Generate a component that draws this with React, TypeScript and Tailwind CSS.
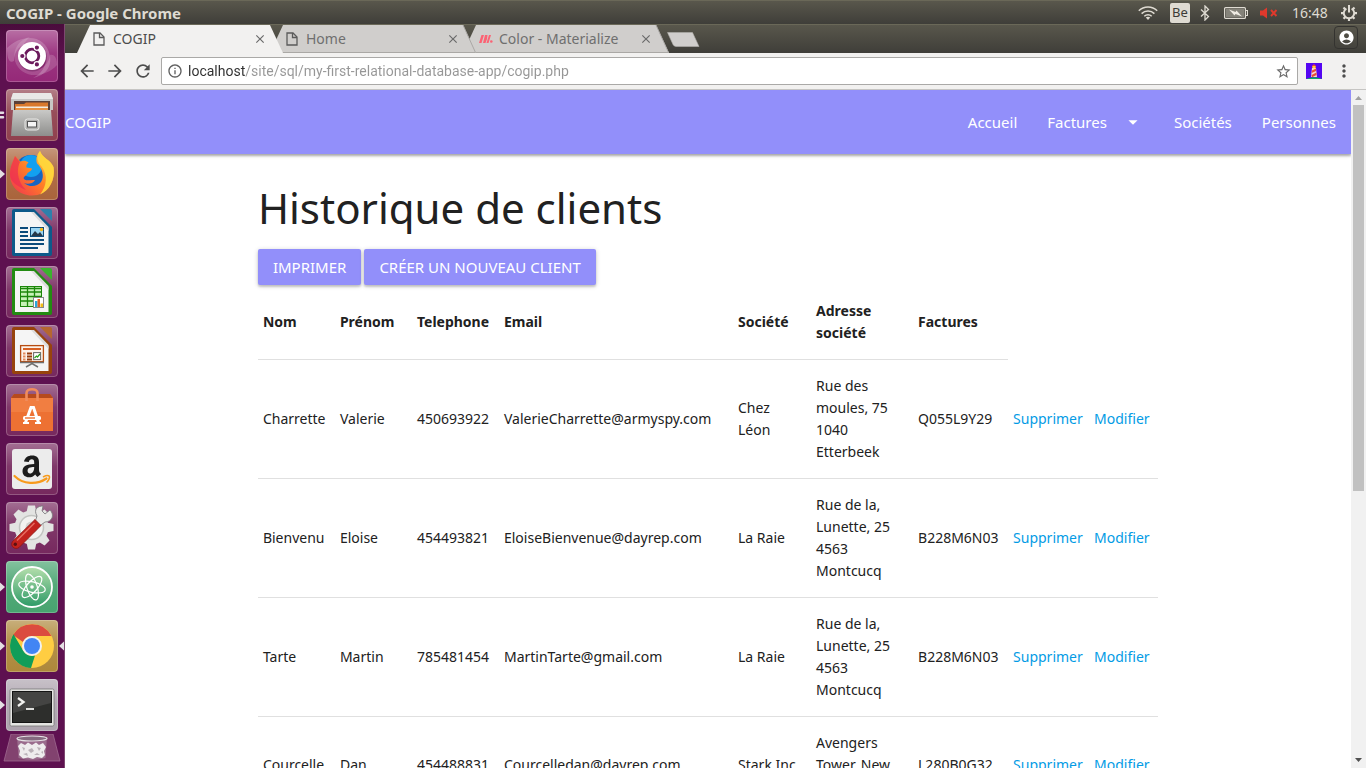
import type { ReactNode } from "react";
import {
  MdAccountCircle,
  MdArrowBack,
  MdArrowDropDown,
  MdArrowForward,
  MdClose,
  MdInfoOutline,
  MdMoreVert,
  MdRefresh,
  MdStarBorder,
} from "react-icons/md";

type Client = {
  nom: string;
  prenom: string;
  telephone: string;
  email: string;
  societe: string;
  adresse: string;
  facture: string;
};

const clients: Client[] = [
  { nom: "Charrette", prenom: "Valerie", telephone: "450693922", email: "ValerieCharrette@armyspy.com", societe: "Chez\nLéon", adresse: "Rue des\nmoules, 75\n1040\nEtterbeek", facture: "Q055L9Y29" },
  { nom: "Bienvenu", prenom: "Eloise", telephone: "454493821", email: "EloiseBienvenue@dayrep.com", societe: "La Raie", adresse: "Rue de la,\nLunette, 25\n4563\nMontcucq", facture: "B228M6N03" },
  { nom: "Tarte", prenom: "Martin", telephone: "785481454", email: "MartinTarte@gmail.com", societe: "La Raie", adresse: "Rue de la,\nLunette, 25\n4563\nMontcucq", facture: "B228M6N03" },
  { nom: "Courcelle", prenom: "Dan", telephone: "454488831", email: "Courcelledan@dayrep.com", societe: "Stark Inc", adresse: "Avengers\nTower, New\nYork", facture: "L280B0G32" },
];

/* ---------- Desktop top bar ---------- */

function WifiIcon() {
  return (
    <svg width="20" height="16" viewBox="0 0 20 16" fill="none" stroke="#dfdbd2" strokeWidth="1.5" aria-hidden="true">
      <path d="M0.8 5.8C5.8 0.8 14.2 0.8 19.2 5.8" />
      <path d="M3.6 8.6C7.2 5 12.8 5 16.4 8.6" />
      <path d="M6.3 11.2C8.4 9.1 11.6 9.1 13.7 11.2" />
      <path d="M7.8 12.6L10 15l2.200-2.400C11 11.500 9 11.500 7.800 12.600Z" fill="#dfdbd2" stroke="none" />
    </svg>
  );
}

function BluetoothIcon() {
  return (
    <svg width="10" height="16" viewBox="0 0 10 16" fill="none" stroke="#dfdbd2" strokeWidth="1.3" aria-hidden="true">
      <path d="M1 4.500L8.500 11.500L5 15V1L8.500 4.500L1 11.500" />
    </svg>
  );
}

function BatteryIcon() {
  return (
    <svg width="24" height="14" viewBox="0 0 24 14" aria-hidden="true">
      <rect x="0.600" y="1.600" width="20.800" height="10.800" rx="1" fill="none" stroke="#dfdbd2" strokeWidth="1.200" />
      <rect x="2" y="3" width="18" height="8" fill="#85837a" />
      <path d="M22 4.500h1.500v5H22" fill="none" stroke="#dfdbd2" strokeWidth="1.200" />
      <path d="M5 3.500l6.500 2.500 1-1.500 5.500 6-6.500-2.500-1 1.500z" fill="#eeeae2" />
    </svg>
  );
}

function MutedIcon() {
  return (
    <svg width="18" height="12" viewBox="0 0 18 12" aria-hidden="true">
      <path d="M0 3.500h3L7 0.500v11L3 8.500H0z" fill="#e0392c" />
      <path d="M11 3l5.500 6M16.500 3L11 9" stroke="#e0392c" strokeWidth="1.900" />
    </svg>
  );
}

function SessionIcon() {
  return (
    <svg width="18" height="18" viewBox="0 0 18 18" fill="none" stroke="#dfdbd2" aria-hidden="true">
      <path d="M6.400 4.600a5.200 5.200 0 1 0 5.200 0" strokeWidth="1.900" />
      <path d="M9 1v7.500" strokeWidth="2" />
      <path d="M3.500 3.500l1.700 1.700M14.500 3.500l-1.700 1.700M1 9.200h2.600M14.400 9.200H17M3.500 14.800l1.700-1.700M14.500 14.800l-1.700-1.700M9 14.500V17" strokeWidth="2.200" />
    </svg>
  );
}

function TopBar() {
  return (
    <header className="flex h-6 shrink-0 items-center justify-between border-t border-[#6a6858] bg-linear-to-b from-[#59574c] to-[#3f3e39] pl-1.5 pr-2 text-[#dfdbd2]">
      <span className="text-[15px] leading-5 font-bold">COGIP - Google Chrome</span>
      <div className="flex items-center text-[14px]">
        <WifiIcon />
        <span className="ml-3 flex h-5 w-5 items-center justify-center rounded-xs bg-[#dfdbd2] text-[13px] text-[#3c3b37]">Be</span>
        <span className="ml-2.5"><BluetoothIcon /></span>
        <span className="ml-3.5"><BatteryIcon /></span>
        <span className="ml-3"><MutedIcon /></span>
        <time className="ml-3.5 w-9">16:48</time>
        <span className="ml-3"><SessionIcon /></span>
      </div>
    </header>
  );
}

/* ---------- Launcher ---------- */

function Pip() {
  return <path d="M0 21.500L5 26L0 30.500Z" fill="#e4dfe3" />;
}

function Tile({ fill }: { fill: string }) {
  return (
    <>
      <rect x="6" y="0" width="52" height="52" rx="4" fill={fill} />
      <rect x="6" y="0" width="52" height="52" rx="4" fill="url(#gloss)" />
      <rect x="6.500" y="0.500" width="51" height="51" rx="3.500" fill="none" stroke="#fff" strokeOpacity="0.220" />
    </>
  );
}

function UbuntuArt() {
  return (
    <>
      <Tile fill="#922274" />
      <path d="M7 18C22 3 46 4 50 26C52 39 43 46 33 48C50 40 50 18 34 14C22 11 14 20 14 31C9 34 7 28 7 18Z" fill="#fff" opacity="0.200" />
      <path d="M57 35C43 50 20 48 15 31C12 19 20 9 30 7C17 17 19 37 32 39C42 41 49 34 50 25C55 24 57 29 57 35Z" fill="#fff" opacity="0.160" />
      <circle cx="32.500" cy="27" r="14.500" fill="#5e1750" opacity="0.400" />
      <circle cx="32" cy="26" r="14" fill="#fff" />
      <circle cx="32" cy="26" r="6.800" fill="none" stroke="#6b1a5c" strokeWidth="2.800" />
      <g fill="#6b1a5c" stroke="#fff" strokeWidth="1.200">
        <circle cx="22.300" cy="26" r="2.700" />
        <circle cx="36.900" cy="17.600" r="2.700" />
        <circle cx="36.900" cy="34.400" r="2.700" />
      </g>
    </>
  );
}

function FilesArt() {
  return (
    <>
      <path d="M0 22.500h3a1 1 0 0 1 0 2.500H0zM0 27h3a1 1 0 0 1 0 2.500H0z" fill="#e4dfe3" />
      <Tile fill="#8c3a48" />
      <path d="M13 4H51L53 10V21H11V10Z" fill="#c7c7c5" />
      <path d="M13 4H51L53 10H11Z" fill="#e9e9e7" />
      <rect x="14" y="12" width="36" height="10" fill="#5c4037" />
      <path d="M15 15h9l2-1.500h22V22H15z" fill="#d9782c" />
      <path d="M16 17.500h32V22H16z" fill="#f3ece0" />
      <path d="M16 19h32v3H16z" fill="#e79142" />
      <path d="M13 21H51L53 47H11Z" fill="url(#steel)" />
      <rect x="25" y="30" width="14" height="11" rx="2.500" fill="#b0b0ae" stroke="#e9e9e7" />
      <rect x="27.500" y="32.500" width="9" height="5.500" fill="#f5f5f5" stroke="#535353" />
    </>
  );
}

function FirefoxArt() {
  return (
    <>
      <Pip />
      <Tile fill="#a75f35" />
      <circle cx="31" cy="24" r="17" fill="#1565c4" />
      <circle cx="31" cy="18" r="11" fill="#12a0f0" />
      <path d="M15 8L20.500 13.500C23 12.500 26 12.500 28.500 14.500C26.500 16 26 18 26.500 19.500L32 20.500C32 22.500 29.500 23.500 27.500 25C27 27.500 24.500 27.500 23.500 30C25 34 30 31.500 35 32C33 36 27 36.500 24 35C29 39.500 37 39 41 34C45 28 42 20 37 15.500C35.500 11 37 6 40 3C42 10 50 11 53.500 19C56 34 47 47.500 32 47.500C19 47.500 10 38 10 27C10 19 12 16 15 8Z" fill="url(#fox)" />
      <path d="M40 3C42 10 50 11 53.500 19C55.500 32 49 43 40 46.500C47 38 48 27 41.500 18.500C37 14 36 8 40 3Z" fill="#ffd83c" opacity="0.900" />
      <path d="M15 8L20 14C17 20 16 32 26 42C16 38 10 33 10 27C10 19 12 16 15 8Z" fill="#ed2c53" opacity="0.700" />
    </>
  );
}

function OfficeSheet({ dark, light, children }: { dark: string; light: string; children: ReactNode }) {
  return (
    <>
      <Tile fill="#722259" />
      <path d="M14 2H34L52 20V47a2 2 0 0 1-2 2H14a2 2 0 0 1-2-2V4a2 2 0 0 1 2-2Z" fill={dark} />
      <path d="M40 2H50a2 2 0 0 1 2 2V14Z" fill={light} />
      <path d="M15 5H33L48.500 21V46H15Z" fill="#f5f5f5" />
      <path d="M34 5L48.500 20V24L31 5Z" fill="#dcdcdc" />
      {children}
    </>
  );
}

function WriterArt() {
  return (
    <OfficeSheet dark="#0d5a8a" light="#2e80ab">
      <path d="M20 21h8M20 25h8M20 29h8M20 33h24M20 37h24M20 41h18" stroke="#0b4b7b" strokeWidth="2" />
      <rect x="30.500" y="20.500" width="13" height="9" fill="#9bd5f3" stroke="#0b4b7b" />
      <path d="M31 29l4-5 3 3 2-2 3 4z" fill="#26384a" />
      <circle cx="41.500" cy="22.500" r="1.700" fill="#f5b917" />
    </OfficeSheet>
  );
}

function CalcArt() {
  return (
    <OfficeSheet dark="#238b12" light="#3bb32e">
      <rect x="20.500" y="20.500" width="21" height="20" fill="#c8f2b8" stroke="#1b8609" />
      <path d="M20 22.500h22M20 26h22M20 30.500h22M20 35h22M27.500 20v21M34.500 20v21" stroke="#1b8609" strokeWidth="1.300" />
      <rect x="33.500" y="31.500" width="10" height="10" fill="#fff" stroke="#888" />
      <path d="M35 35h2.500v6H35z" fill="#2ba6db" />
      <path d="M37.500 33H40v8h-2.500z" fill="#e46224" />
      <path d="M40.500 37.500H43V41h-2.500z" fill="#f2bd16" />
    </OfficeSheet>
  );
}

function ImpressArt() {
  return (
    <OfficeSheet dark="#97430d" light="#b56730">
      <rect x="20.600" y="20.600" width="22.800" height="16" fill="#fdf3ea" stroke="#b64c12" strokeWidth="1.300" />
      <path d="M23 24h18" stroke="#d76023" strokeWidth="2" />
      <path d="M23 28.500h2.500M23 31.500h2.500M23 34.500h2.500" stroke="#e38b5b" strokeWidth="1.800" />
      <path d="M27 28.500h5M27 31.500h5M27 34.500h5" stroke="#963d0c" strokeWidth="1.800" />
      <rect x="33.600" y="27.600" width="7" height="7" fill="#fff" stroke="#666" />
      <path d="M34.500 33l2-2 1 1 2.500-3" fill="none" stroke="#28a01b" strokeWidth="1.200" />
      <path d="M20 37.500h24M32 37v2M26 42l6-3.500L38 42" fill="none" stroke="#707070" strokeWidth="1.500" />
    </OfficeSheet>
  );
}

function SoftwareArt() {
  return (
    <>
      <Tile fill="#722259" />
      <path d="M11 14L14 10H50L53 14V47H11Z" fill="#ed7133" />
      <path d="M11 14L14 10H50L53 14Z" fill="#b64a1d" />
      <path d="M11 14H53V28H11Z" fill="#f58b50" opacity="0.500" />
      <path d="M26.500 17V9C26.500 4 37.500 4 37.500 9V17" fill="none" stroke="#f08c5d" strokeWidth="2.600" />
      <path d="M25.500 38.500L31 23.500H33.500L38.500 38.500" fill="none" stroke="#fff" strokeWidth="3" />
      <rect x="23" y="32" width="18" height="4" rx="1.500" fill="#fff" />
      <path d="M25 34h10" stroke="#ed7133" strokeWidth="1.400" />
      <path d="M23 39h6M35 39h6" stroke="#fff" strokeWidth="2" />
    </>
  );
}

function AmazonArt() {
  return (
    <>
      <Tile fill="#722259" />
      <rect x="12" y="6" width="40" height="40" rx="3" fill="#ececec" />
      <path d="M24 18.500C25 14.500 28 12.500 32 12.500C37 12.500 39 15 39 19V27C39 29 40 30 41 31L37.500 34C36.500 33.300 35.700 32.500 35.200 31.500C33.500 33.500 31.500 34.300 29 34.300C25.200 34.300 22.500 32 22.500 28.300C22.500 23 26.500 21.300 34.200 21V19.500C34.200 17.500 33.500 16.300 31.800 16.300C30 16.300 29.200 17.300 28.800 19ZM34.200 24C30 24 27.600 25 27.600 27.700C27.600 29.500 28.500 30.500 30 30.500C32.700 30.500 34.200 28 34.200 24Z" fill="#1c1c1c" fillRule="evenodd" />
      <path d="M14.500 33C23 41.500 37 42 46.500 35.500" fill="none" stroke="#f79a1c" strokeWidth="2.200" strokeLinecap="round" />
      <path d="M43.500 33.700C46 32.500 48.500 32.500 49.300 33.200C50 34 49 37 47 39" fill="none" stroke="#f79a1c" strokeWidth="1.600" strokeLinecap="round" />
    </>
  );
}

function SettingsArt() {
  const teeth = [0, 45, 90, 135, 180, 225, 270, 315];
  return (
    <>
      <Tile fill="#722259" />
      <g transform="translate(31.500 25.500)">
        {teeth.map((angle) => (
          <path key={angle} d="M-5 -15L-3.500 -22H3.500L5 -15Z" fill="#e3e4e2" transform={`rotate(${angle})`} />
        ))}
        <circle r="17" fill="#e3e4e2" />
        <circle r="12" fill="#f2f2f0" stroke="#c2c4c1" strokeWidth="1.500" />
        <circle r="6" fill="#d0d0ce" />
      </g>
      <path d="M35 20L37 14C33 7 38 4 43 4L42 9L45 12L50 8C55 13 52 20 45 20L38 25Z" fill="#e9e9e7" stroke="#77777a" strokeWidth="0.800" />
      <path d="M35 17.500L41 23.500L19 45.500C15 48.500 9.500 44 12.500 39.500Z" fill="#c3221d" stroke="#8d1512" strokeWidth="0.800" />
      <path d="M34.500 21L17 38.500" stroke="#e76d62" strokeWidth="1.500" />
      <circle cx="15.300" cy="42.300" r="1.700" fill="#5c1010" />
    </>
  );
}

function AtomArt() {
  return (
    <>
      <Pip />
      <Tile fill="#42a16b" />
      <circle cx="32" cy="26" r="20" fill="url(#atomGreen)" stroke="#fff" strokeWidth="1.800" />
      <g fill="none" stroke="#fff" strokeWidth="1.200" transform="translate(32 26)">
        <ellipse rx="13.500" ry="5.200" transform="rotate(13)" />
        <ellipse rx="13.500" ry="5.200" transform="rotate(72)" />
        <ellipse rx="13.500" ry="5.200" transform="rotate(-48)" />
      </g>
      <circle cx="32" cy="26" r="1.800" fill="#fff" />
    </>
  );
}

function ChromeArt() {
  return (
    <>
      <Pip />
      <path d="M64 21.500L59 26L64 30.500Z" fill="#e4dfe3" />
      <Tile fill="#ab8435" />
      <circle cx="32" cy="26" r="22" fill="#ffcd42" />
      <path d="M13 15A22 22 0 0 1 51.500 16H32A10 10 0 0 0 23 22Z" fill="#db4b3f" />
      <path d="M13.500 14.200L23.400 31A10 10 0 0 0 35 35.500L31 48A22 22 0 0 1 13.500 14.200Z" fill="#109d59" />
      <circle cx="32" cy="26" r="10" fill="#f1f1f1" />
      <circle cx="32" cy="26" r="8" fill="#4285f4" />
    </>
  );
}

function TerminalArt() {
  return (
    <>
      <Pip />
      <Tile fill="#aaa0ab" />
      <rect x="10" y="10" width="44" height="37" rx="1.500" fill="#e4e4e2" stroke="#777" strokeWidth="0.800" />
      <rect x="12.500" y="12.500" width="39" height="31" fill="#2d2e2c" stroke="#141414" />
      <path d="M13 13H51V24L13 34Z" fill="#fff" opacity="0.110" />
      <path d="M18 19L23.500 23L18 27" fill="none" stroke="#f2f2f0" strokeWidth="2.300" />
      <path d="M26 30h8" stroke="#f2f2f0" strokeWidth="1.800" />
    </>
  );
}

function TrashArt() {
  return (
    <>
      <path d="M11 0H53L60 27H4Z" fill="#82426f" stroke="#9f6a90" strokeWidth="0.800" />
      <path d="M17 3H47L45.500 24Q32 28 18.500 24Z" fill="#b79fb2" opacity="0.450" />
      <path d="M18 12L21 9L25 11L28 8.500L32 11L36 8.500L39 11L43 9L46 13L44 17L45 21L42 24L37 23L33 25L28 23.500L23 24.500L19 21L20 17Z" fill="#eeeced" />
      <path d="M22 13l3 1-1 3zM28 16l4-2 2 3-3 2zM37 13l4 1-2 3zM23 20l4-1 1 3zM34 21l3-2 3 2zM41 18l2-1v3z" fill="#bab2b8" />
      <ellipse cx="32" cy="4.500" rx="15" ry="2.500" fill="#846a7f" stroke="#e6e2e5" strokeWidth="1.200" />
    </>
  );
}

const launcherItems: { name: string; art: () => ReactNode }[] = [
  { name: "Rechercher", art: UbuntuArt },
  { name: "Fichiers", art: FilesArt },
  { name: "Firefox", art: FirefoxArt },
  { name: "LibreOffice Writer", art: WriterArt },
  { name: "LibreOffice Calc", art: CalcArt },
  { name: "LibreOffice Impress", art: ImpressArt },
  { name: "Logiciels Ubuntu", art: SoftwareArt },
  { name: "Amazon", art: AmazonArt },
  { name: "Paramètres", art: SettingsArt },
  { name: "Atom", art: AtomArt },
  { name: "Google Chrome", art: ChromeArt },
  { name: "Terminal", art: TerminalArt },
];

function Launcher() {
  return (
    <nav aria-label="Lanceur" className="flex w-[65px] shrink-0 flex-col gap-[7px] overflow-hidden border-r border-[#7d4770] bg-linear-to-b from-[#4a0c3c] via-[#5e1150] via-5% to-[#5e1150] pt-1.5">
      <svg className="absolute" width="0" height="0" aria-hidden="true">
        <defs>
          <linearGradient id="gloss" x1="0" y1="0" x2="0" y2="1">
            <stop offset="0" stopColor="#fff" stopOpacity="0.350" />
            <stop offset="0.450" stopColor="#fff" stopOpacity="0.100" />
            <stop offset="1" stopColor="#fff" stopOpacity="0.030" />
          </linearGradient>
          <linearGradient id="steel" x1="0" y1="0" x2="0" y2="1">
            <stop offset="0" stopColor="#c9c9c7" />
            <stop offset="1" stopColor="#8e8e8c" />
          </linearGradient>
          <linearGradient id="fox" x1="0" y1="1" x2="1" y2="0">
            <stop offset="0" stopColor="#f03052" />
            <stop offset="0.500" stopColor="#ff8026" />
            <stop offset="1" stopColor="#ffe14a" />
          </linearGradient>
          <linearGradient id="atomGreen" x1="0" y1="0" x2="0" y2="1">
            <stop offset="0" stopColor="#b5dfac" />
            <stop offset="1" stopColor="#2d9a67" />
          </linearGradient>
        </defs>
      </svg>
      {launcherItems.map(({ name, art: Art }) => (
        <button key={name} type="button" aria-label={name} className="h-[52px] shrink-0">
          <svg width="64" height="52" viewBox="0 0 64 52" aria-hidden="true"><Art /></svg>
        </button>
      ))}
      <button type="button" aria-label="Corbeille" className="-mt-1 h-7 shrink-0">
        <svg width="64" height="28" viewBox="0 0 64 28" aria-hidden="true"><TrashArt /></svg>
      </button>
    </nav>
  );
}

/* ---------- Browser window ---------- */

function PageIcon() {
  return (
    <svg width="12" height="14" viewBox="0 0 12 14" fill="none" stroke="#5a5a5a" strokeWidth="1.300" aria-hidden="true">
      <path d="M1 1H7L11 5V13H1Z" />
      <path d="M6.500 1V5.500H11" />
    </svg>
  );
}

function MaterializeIcon() {
  return (
    <svg width="14" height="8" viewBox="0 0 14 8" fill="#fb6374" aria-hidden="true">
      <path d="M2.500 0H5L2.500 8H0Z" />
      <path d="M6 0H8.500L8 4L6.500 8H4Z" />
      <path d="M10 0H12L9.500 8H7.500Z" />
      <circle cx="12.300" cy="6.500" r="1.300" />
    </svg>
  );
}

function Tab({ title, icon, active, className }: { title: string; icon: ReactNode; active?: boolean; className: string }) {
  return (
    <div role="tab" aria-selected={!!active} className={`relative flex w-[206px] items-center pb-px ${className}`}>
      <svg className="absolute inset-0 h-full w-full" viewBox="0 0 206 28" preserveAspectRatio="none" aria-hidden="true">
        <path d="M0 28L13 0H193L206 28Z" fill={active ? "#f2f1f0" : "#d0cecc"} />
        {!active && <path d="M0 27.500H205.500L193 0" fill="none" stroke="#aaa8a5" />}
      </svg>
      <span className="relative ml-4 flex w-5 items-center">{icon}</span>
      <span className={`relative flex-1 text-[14px] ${active ? "text-[#4c4c4c]" : "text-[#6f6f6f]"}`}>{title}</span>
      <button type="button" aria-label={`Fermer ${title}`} className="relative mr-4 text-[#6a6a6a]">
        <MdClose size={14} />
      </button>
    </div>
  );
}

function TabStrip() {
  return (
    <div className="flex h-[29px] shrink-0 items-stretch border-t border-[#6a6858] bg-linear-to-b from-[#59574c] to-[#3f3e39] pl-3">
      <div role="tablist" className="isolate flex">
        <Tab title="COGIP" icon={<PageIcon />} active className="z-30" />
        <Tab title="Home" icon={<PageIcon />} className="z-20 -ml-[13px]" />
        <Tab title="Color - Materialize" icon={<MaterializeIcon />} className="z-10 -ml-[13px]" />
      </div>
      <button type="button" aria-label="Nouvel onglet" className="-ml-0.5 mt-[7px] h-[15px]">
        <svg width="33" height="15" viewBox="0 0 33 15" aria-hidden="true">
          <path d="M0.500 0.500H25.500L32 14.500H9Q7 14.500 6 12.500Z" fill="#d0cecc" stroke="#b2b0ad" strokeWidth="0.600" />
        </svg>
      </button>
      <button type="button" aria-label="Profil" className="mt-px mb-1 ml-auto mr-2 flex w-6 items-center justify-center rounded-sm border border-[#343330] text-white">
        <MdAccountCircle size={17} />
      </button>
    </div>
  );
}

function LighthouseIcon() {
  return (
    <svg width="16" height="16" viewBox="0 0 16 16" aria-hidden="true">
      <rect width="16" height="16" fill="#5405f2" />
      <path d="M0 16Q8 12.500 16 16Z" fill="#0caa63" />
      <path d="M6 5H10L11 14H5Z" fill="#f8d9d1" />
      <path d="M6 7.500L10 5.500V8L5.700 10ZM5.500 12L10.500 9.500V12L6 14.300Z" fill="#e84a39" />
      <path d="M6 4.500V3L8 1L10 3V4.500Z" fill="#e84a39" />
      <rect x="6.500" y="3" width="3" height="2.200" fill="#ffd33c" />
    </svg>
  );
}

function Toolbar() {
  return (
    <div className="flex h-[37px] shrink-0 items-center border-b border-[#c6c5c3] bg-[#f2f1f0] pl-3 pr-3 text-[#4d4d4d]">
      <div className="flex gap-2">
        <button type="button" aria-label="Retour"><MdArrowBack size={20} /></button>
        <button type="button" aria-label="Suivant"><MdArrowForward size={20} /></button>
        <button type="button" aria-label="Actualiser"><MdRefresh size={20} /></button>
      </div>
      <div className="ml-2 flex h-7 flex-1 items-center rounded-xs border border-[#aaa9a7] bg-white px-[5px]">
        <MdInfoOutline size={16} className="shrink-0 text-[#5f5f5f]" />
        <input
          type="text"
          aria-label="Adresse"
          defaultValue="localhost/site/sql/my-first-relational-database-app/cogip.php"
          className="ml-[5px] min-w-0 flex-1 bg-[linear-gradient(to_right,#2f2f2f_57px,#969696_57px)] bg-clip-text font-[Roboto,sans-serif] text-[14px] text-transparent outline-none"
        />
        <button type="button" aria-label="Ajouter aux favoris" className="text-[#6a6a6a]"><MdStarBorder size={17} /></button>
      </div>
      <button type="button" aria-label="Lighthouse" className="ml-2"><LighthouseIcon /></button>
      <button type="button" aria-label="Menu" className="ml-3"><MdMoreVert size={20} /></button>
    </div>
  );
}

function Scrollbar() {
  return (
    <div className="flex w-[15px] shrink-0 flex-col items-center bg-[#f1f1f1]" aria-hidden="true">
      <svg width="15" height="15" viewBox="0 0 15 15"><path d="M4 10H11L7.500 6Z" fill="#a0a0a0" /></svg>
      <div className="h-[57%] w-[11px] bg-[#c1c1c1]" />
      <svg className="mt-auto" width="15" height="15" viewBox="0 0 15 15"><path d="M4 5H11L7.500 9Z" fill="#505050" /></svg>
    </div>
  );
}

/* ---------- COGIP application ---------- */

function SiteNav() {
  return (
    <nav className="relative flex h-16 items-center justify-between bg-[#928ffa] text-[15px] leading-6 text-white shadow-[0_2px_2px_0_rgba(0,0,0,0.24),0_1px_5px_0_rgba(0,0,0,0.2)]">
      <a href="#accueil">COGIP</a>
      <ul className="flex items-center">
        <li><a href="#accueil" className="block px-[15px]">Accueil</a></li>
        <li>
          <a href="#factures" className="flex items-center gap-[15px] px-[15px]">
            Factures
            <MdArrowDropDown size={22} />
          </a>
        </li>
        <li><a href="#societes" className="block px-[15px]">Sociétés</a></li>
        <li><a href="#personnes" className="block px-[15px]">Personnes</a></li>
      </ul>
    </nav>
  );
}

const buttonClass =
  "h-9 rounded-xs bg-[#928ffa] px-[15px] text-[15px] text-white uppercase shadow-[0_2px_2px_0_rgba(0,0,0,0.14),0_1px_5px_0_rgba(0,0,0,0.2)]";

function ClientTable() {
  return (
    <table className="w-full table-fixed border-collapse text-left text-[14px] leading-[22px]">
      <colgroup>
        <col className="w-[77px]" />
        <col className="w-[77px]" />
        <col className="w-[87px]" />
        <col className="w-[234px]" />
        <col className="w-[78px]" />
        <col className="w-[102px]" />
        <col className="w-[95px]" />
        <col className="w-[81px]" />
        <col className="w-[69px]" />
      </colgroup>
      <thead>
        <tr>
          {["Nom", "Prénom", "Telephone", "Email", "Société", "Adresse société", "Factures"].map((label) => (
            <th key={label} scope="col" className="border-b border-[#e0e0e0] px-[5px] py-[15px] font-bold">{label}</th>
          ))}
        </tr>
      </thead>
      <tbody>
        {clients.map((client) => (
          <tr key={client.email} className="border-b border-[#e0e0e0] whitespace-pre-line">
            <td className="px-[5px] py-[15px]">{client.nom}</td>
            <td className="px-[5px] py-[15px]">{client.prenom}</td>
            <td className="px-[5px] py-[15px]">{client.telephone}</td>
            <td className="px-[5px] py-[15px]">{client.email}</td>
            <td className="px-[5px] py-[15px]">{client.societe}</td>
            <td className="px-[5px] py-[15px]">{client.adresse}</td>
            <td className="px-[5px] py-[15px]">{client.facture}</td>
            <td className="px-[5px] py-[15px]"><a href="#supprimer" className="text-[#039be5]">Supprimer</a></td>
            <td className="px-[5px] py-[15px]"><a href="#modifier" className="text-[#039be5]">Modifier</a></td>
          </tr>
        ))}
      </tbody>
    </table>
  );
}

function SitePage() {
  return (
    <div className="min-w-0 flex-1 overflow-hidden bg-white text-[#212121]">
      <SiteNav />
      <main className="mx-auto w-[70%]">
        <h1 className="pt-[30px] text-[42px] leading-[48px]">Historique de clients</h1>
        <div className="mt-[17px] flex gap-[3px]">
          <button type="button" className={buttonClass}>Imprimer</button>
          <button type="button" className={buttonClass}>Créer un nouveau client</button>
        </div>
        <ClientTable />
      </main>
    </div>
  );
}

export default function App() {
  return (
    <div className="flex h-screen flex-col overflow-hidden font-['Noto_Sans',sans-serif]">
      <TopBar />
      <div className="flex min-h-0 flex-1">
        <Launcher />
        <div className="flex min-w-0 flex-1 flex-col">
          <TabStrip />
          <Toolbar />
          <div className="flex min-h-0 flex-1">
            <SitePage />
            <Scrollbar />
          </div>
        </div>
      </div>
    </div>
  );
}
